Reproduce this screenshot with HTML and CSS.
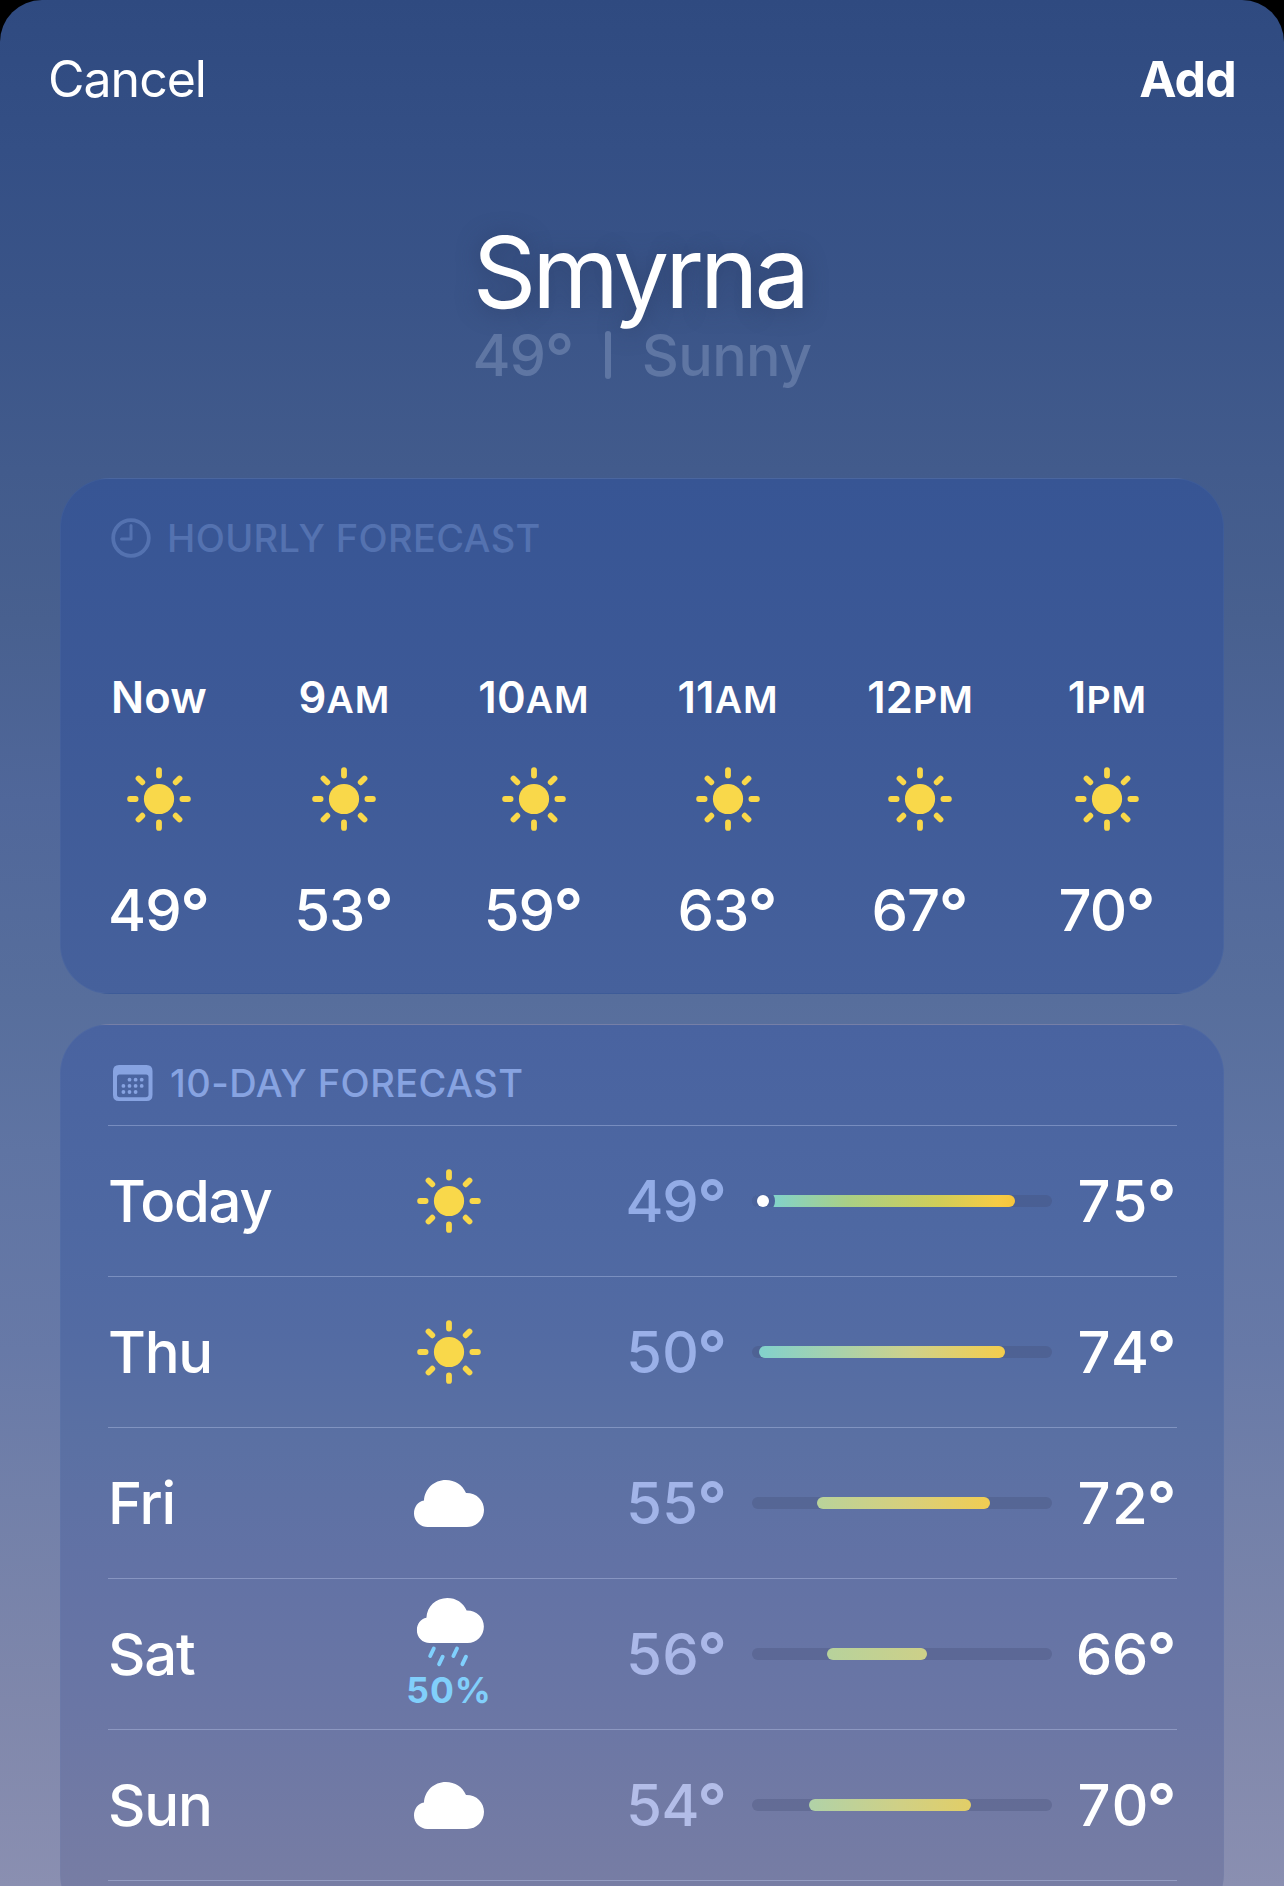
FILE: index.html
```html
<!DOCTYPE html>
<html lang="en">
<head>
<meta charset="utf-8">
<title>Smyrna weather</title>
<link rel="stylesheet" href="styles.css">
</head>
<body>
<svg class="defs" aria-hidden="true">
  <symbol id="sun" viewBox="-32 -32 64 64">
    <circle r="15.1" fill="#f9d84a"/>
    <g stroke="#f9d84a" stroke-width="5.8" stroke-linecap="round">
      <path d="M0-23.4V-28.9M0 23.4V28.9M-23.4 0H-28.9M23.4 0H28.9"/>
      <path d="M16.7-16.7L20.5-20.5M16.7 16.7L20.5 20.5M-16.7-16.7L-20.5-20.5M-16.7 16.7L-20.5 20.5"/>
    </g>
  </symbol>
  <symbol id="cloud" viewBox="0 0 70 47">
    <path fill="#fff" d="M13.5 47C6 47 0 41 0 33.600C0 26.800 4 21.600 10 20.600C10.600 8.800 20 0 31.800 0C41 0 48.600 5 52 13C62.500 12.800 70 20.400 70 29.800C70 39.500 62.500 47 53 47Z"/>
  </symbol>
</svg>
<main class="sheet">
  <header class="bar">
    <span class="cancel">Cancel</span>
    <span class="add">Add</span>
  </header>
  <section class="place">
    <h1 class="city">Smyrna</h1>
    <p class="summary"><span class="now-temp">49<i class="deg">°</i></span><span class="divider"></span><span class="condition">Sunny</span></p>
  </section>

  <section class="card hourly">
    <h2 class="card-title faded">
      <svg class="clock" viewBox="0 0 40 40"><g fill="none" stroke="currentColor" stroke-linecap="round" stroke-linejoin="round"><circle cx="20" cy="20" r="17.800" stroke-width="3.800"/><path d="M20 7.500V21H10.500" stroke-width="3"/></g></svg>
      <span class="hourly-label">HOURLY FORECAST</span>
    </h2>
    <div class="hours">
      <div class="hour"><span class="time">Now</span><svg class="sun"><use href="#sun"/></svg><span class="temp">49<i class="deg">°</i></span></div>
      <div class="hour"><span class="time">9<small>AM</small></span><svg class="sun"><use href="#sun"/></svg><span class="temp">53<i class="deg">°</i></span></div>
      <div class="hour"><span class="time">10<small>AM</small></span><svg class="sun"><use href="#sun"/></svg><span class="temp">59<i class="deg">°</i></span></div>
      <div class="hour"><span class="time">11<small>AM</small></span><svg class="sun"><use href="#sun"/></svg><span class="temp">63<i class="deg">°</i></span></div>
      <div class="hour"><span class="time">12<small>PM</small></span><svg class="sun"><use href="#sun"/></svg><span class="temp">67<i class="deg">°</i></span></div>
      <div class="hour"><span class="time">1<small>PM</small></span><svg class="sun"><use href="#sun"/></svg><span class="temp">70<i class="deg">°</i></span></div>
    </div>
  </section>

  <section class="card daily">
    <h2 class="card-title">
      <svg class="calendar" viewBox="0 0 40 36"><path fill="currentColor" fill-rule="evenodd" d="M6 0H33.500Q39.500 0 39.500 6V30Q39.500 36 33.500 36H6Q0 36 0 30V6Q0 0 6 0ZM6.500 9.500Q4 9.500 4 12V29.500Q4 32.300 6.800 32.300H32.700Q35.500 32.300 35.500 29.500V12Q35.500 9.500 33 9.500Z"/><g fill="currentColor"><circle cx="16.500" cy="14.700" r="1.900"/><circle cx="22.600" cy="14.700" r="1.900"/><circle cx="28.700" cy="14.700" r="1.900"/><circle cx="10.400" cy="20.900" r="1.900"/><circle cx="16.500" cy="20.900" r="1.900"/><circle cx="22.600" cy="20.900" r="1.900"/><circle cx="28.700" cy="20.900" r="1.900"/><circle cx="10.400" cy="27" r="1.900"/><circle cx="16.500" cy="27" r="1.900"/><circle cx="22.600" cy="27" r="1.900"/></g></svg>
      <span class="daily-label">10-DAY FORECAST</span>
    </h2>
    <div class="days">
      <div class="day"><span class="name">Today</span><span class="sky"><svg class="sun"><use href="#sun"/></svg></span><span class="low">49<i class="deg">°</i></span><span class="track"><span class="range today" style="margin-left:1px;width:262px"></span><span class="current"></span></span><span class="high">75<i class="deg">°</i></span></div>
      <div class="day"><span class="name">Thu</span><span class="sky"><svg class="sun"><use href="#sun"/></svg></span><span class="low">50<i class="deg">°</i></span><span class="track"><span class="range thu" style="margin-left:7px;width:246px"></span></span><span class="high">74<i class="deg">°</i></span></div>
      <div class="day"><span class="name">Fri</span><span class="sky"><svg class="cloud"><use href="#cloud"/></svg></span><span class="low">55<i class="deg">°</i></span><span class="track"><span class="range fri" style="margin-left:65px;width:173px"></span></span><span class="high">72<i class="deg">°</i></span></div>
      <div class="day"><span class="name">Sat</span><span class="sky"><svg class="rain" viewBox="0 0 70 70"><use href="#cloud" x="2.700" y="0" width="67.300" height="45"/><path d="M19.800 50.500L16.200 58M28.700 58.700L25.100 66.200M43 50.500L39.400 58M52 58.700L48.400 66.200" stroke="#80d0fd" stroke-width="3.900" stroke-linecap="round"/></svg><span class="chance">50%</span></span><span class="low">56<i class="deg">°</i></span><span class="track"><span class="range sat" style="margin-left:75px;width:100px"></span></span><span class="high">66<i class="deg">°</i></span></div>
      <div class="day"><span class="name">Sun</span><span class="sky"><svg class="cloud"><use href="#cloud"/></svg></span><span class="low">54<i class="deg">°</i></span><span class="track"><span class="range sun-range" style="margin-left:57px;width:162px"></span></span><span class="high">70<i class="deg">°</i></span></div>
      <div class="day"></div>
    </div>
  </section>
</main>
</body>
</html>
```
FILE: styles.css
```css
* { box-sizing: border-box; }
html, body { margin: 0; background: #000; }
body { font-family: Inter, "Liberation Sans", sans-serif; color: #fff; }
h1, h2, p { margin: 0; font-weight: 400; }
i { font-style: normal; }
svg { display: block; flex: none; }
.defs { display: none; }

.sheet {
  width: 1284px;
  height: 1886px;
  overflow: hidden;
  border-radius: 42px 42px 0 0;
  background: linear-gradient(180deg, #2f4a80 0, #344f85 150px, #3a5488 300px, #425b8c 470px, #48608f 620px, #50679a 800px, #576e9c 1000px, #5f74a3 1150px, #6779a7 1350px, #7280a9 1500px, #7f87ab 1700px, #8a8fb1 1886px);
}

.bar {
  height: 158px;
  padding: 0 48px;
  display: flex;
  justify-content: space-between;
  align-items: center;
  font-size: 50px;
  line-height: 60px;
}
.cancel { letter-spacing: -1px; }
.add { font-weight: 700; letter-spacing: -.8px; }

.place {
  height: 320px;
  padding-top: 63px;
  display: flex;
  flex-direction: column;
  align-items: center;
}
.city {
  font-size: 99px;
  line-height: 102px;
  letter-spacing: -4px;
  padding-right: 5px;
  text-shadow: 0 2px 22px rgba(40, 55, 90, .55);
}
.summary {
  display: flex;
  align-items: center;
  height: 64px;
  font-size: 57.5px;
  font-weight: 500;
  line-height: 64px;
  color: #5f76a3;
}
.condition { letter-spacing: -.7px; }
.divider { width: 5.5px; height: 48px; margin: 0 31px; border-radius: 3px; background: currentColor; }

.card {
  margin: 0 60px;
  border: 1px solid rgba(120, 145, 200, .1);
  border-radius: 50px;
  padding: 0 46px 0 47px;
}
.hourly { height: 516px; background: linear-gradient(180deg, #375594, #3d5997 45%, #46619c); }
.daily {
  height: 900px;
  margin-top: 30px;
  background: linear-gradient(180deg, #4963a0, #4e68a2 200px, #536ba3 310px, #5a70a3 410px, #6272a5 540px, #6a76a5 680px, #777da4 862px);
}
.card-title {
  display: flex;
  align-items: center;
  font-size: 38px;
  font-weight: 500;
  line-height: 46px;
  color: #87a3e1;
}
.faded { color: #5472b0; }
.hourly .card-title { height: 118px; padding-left: 3px; }
.daily .card-title { height: 100px; padding: 16px 0 0 5px; }
.clock { width: 40px; height: 40px; }
.calendar { width: 40px; height: 36px; }
.hourly-label { margin-left: 16px; letter-spacing: .35px; }
.daily-label { margin-left: 17px; letter-spacing: .45px; }

.hours {
  display: grid;
  grid-template-columns: 94px 92px 103px 101px 100px 90px;
  column-gap: 92px;
  padding: 75px 0 0 4px;
}
.hour { display: flex; flex-direction: column; align-items: center; white-space: nowrap; }
.time { font-size: 43.5px; font-weight: 600; line-height: 50px; height: 50px; letter-spacing: .2px; }
.time small { font-size: 37.5px; letter-spacing: 1px; margin-right: -1px; }
.sun { width: 64px; height: 64px; }
.hour .sun { margin: 45px 0 44px; }
.temp, .low, .high, .name, .now-temp { font-size: 58px; font-weight: 500; line-height: 70px; letter-spacing: -1px; }
.now-temp { line-height: 64px; }
.deg { font-size: 1.12em; font-weight: 600; line-height: 0; vertical-align: -.07em; margin-left: -.5px; letter-spacing: 0; }
.now-temp .deg { font-weight: 500; }

.day {
  height: 151px;
  display: grid;
  grid-template-columns: 285px 112px 222px 25px 300px 124.5px;
  align-items: center;
  border-top: 1px solid rgba(205, 218, 250, .34);
}
.name { letter-spacing: -1.2px; }
.sky { display: flex; flex-direction: column; align-items: center; }
.cloud { width: 70px; height: 47px; }
.rain { width: 70px; height: 70px; margin-top: -2px; }
.chance { margin-top: 5px; font-size: 35.5px; line-height: 36px; font-weight: 700; color: #81cffb; letter-spacing: .9px; }
.low, .high { font-variant-numeric: tabular-nums; letter-spacing: -1.6px; justify-self: end; }
.low { color: #93ace6; }
.day:nth-child(2) .low { color: #9ab0e8; }
.day:nth-child(3) .low { color: #a2b4e8; }
.day:nth-child(4) .low { color: #abb8e8; }
.day:nth-child(5) .low { color: #b3bde8; }

.track {
  grid-column: 5;
  position: relative;
  height: 12px;
  border-radius: 6px;
  overflow: hidden;
  background: rgba(65, 75, 115, .3);
}
.range { display: block; height: 12px; border-radius: 6px; }
.today { background: linear-gradient(90deg, #7fd3cf 15px, #a9cf85 95px, #d0cd58 185px, #f7cb44 245px, #f6c53c); }
.thu { background: linear-gradient(90deg, #82d1cc, #a9d2aa 33%, #cfd18a 62%, #f4cd4c); }
.fri { background: linear-gradient(90deg, #b9d39b, #d9cf7a 55%, #f1cd52); }
.sat { background: linear-gradient(90deg, #b7d29c, #cdd088); }
.sun-range { background: linear-gradient(90deg, #b0d2a8, #cfd086 55%, #e2ce67); }
.current {
  position: absolute;
  left: 5px;
  top: 0;
  width: 12px;
  height: 12px;
  border-radius: 50%;
  background: #fff;
  box-shadow: 0 0 0 6px #4a629a;
}
```
